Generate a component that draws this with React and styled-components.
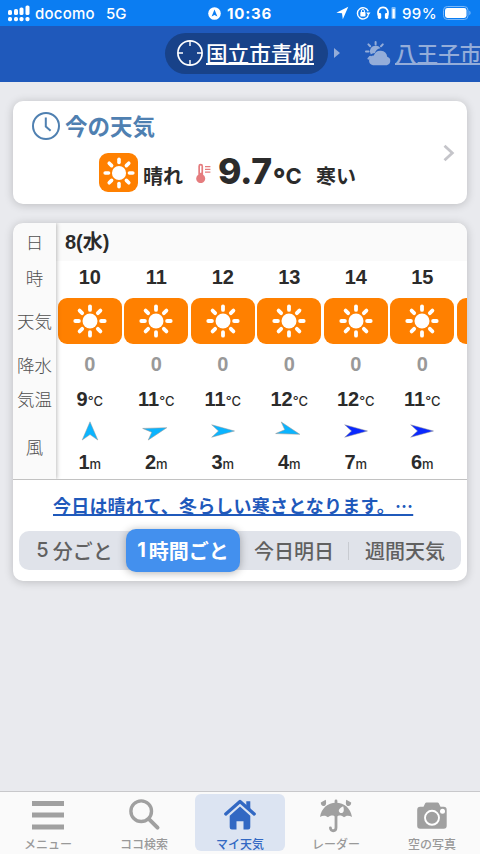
import React from 'react';
import styled, { createGlobalStyle } from 'styled-components';

const hours = [
  { hour: 10, rain: 0, temp: 9, wind: 1, angle: 0, color: '#0ab4ff' },
  { hour: 11, rain: 0, temp: 11, wind: 2, angle: 69, color: '#0ab4ff' },
  { hour: 12, rain: 0, temp: 11, wind: 3, angle: 90, color: '#0ab4ff' },
  { hour: 13, rain: 0, temp: 12, wind: 4, angle: 111, color: '#0ab4ff' },
  { hour: 14, rain: 0, temp: 12, wind: 7, angle: 90, color: '#0a28ff' },
  { hour: 15, rain: 0, temp: 11, wind: 6, angle: 90, color: '#0a28ff' },
];

const rays = [0, 45, 90, 135, 180, 225, 270, 315];

const Sun = ({ size }) => (
  <svg width={size} height={size} viewBox="0 0 34 34">
    <circle cx="17" cy="17" r="7.5" fill="#fff" />
    {rays.map((angle) => (
      <path
        key={angle}
        d="M17 2.300v3.600"
        stroke="#fff"
        strokeWidth="3.800"
        strokeLinecap="round"
        transform={`rotate(${angle} 17 17)`}
      />
    ))}
  </svg>
);

const SignalIcon = () => (
  <svg width="22" height="17" viewBox="0 0 22 17" fill="#fff">
    <rect x="0" y="5" width="4" height="5" rx="1.6" />
    <rect x="6" y="4" width="4" height="6" rx="1.6" />
    <rect x="11.5" y="2.5" width="4" height="7.5" rx="1.6" />
    <rect x="17.5" y="0.5" width="4" height="9.5" rx="1.6" />
    <rect x="0" y="12" width="4" height="4.2" rx="1.6" />
    <rect x="6" y="12" width="4" height="4.2" rx="1.6" />
    <rect x="11.5" y="12" width="4" height="4.2" rx="1.6" />
    <rect x="17.5" y="12" width="4" height="4.2" rx="1.6" />
  </svg>
);

const LocationBadge = () => (
  <svg width="13" height="13" viewBox="0 0 13 13">
    <circle cx="6.5" cy="6.5" r="6.3" fill="#fff" />
    <path d="M6.5 2.6l2.9 7-2.9-1.7-2.9 1.7z" fill="#0b7df2" />
  </svg>
);

const StatusIcons = () => (
  <svg width="61" height="16" viewBox="0 0 61 16" fill="none">
    <path d="M.3 7.8L12.3 1.800 6.8 14.200 6 8.200z" fill="#fff" />
    <path d="M32.2 6.2a5.6 5.6 0 1 0 .1 4" stroke="#fff" strokeWidth="1.400" />
    <path d="M30.2 7.6h4.3l-2.1 2.8z" fill="#fff" />
    <rect x="24.3" y="7" width="5.2" height="4.5" rx=".8" fill="#fff" />
    <path d="M25.4 7.5V6a1.5 1.5 0 0 1 3 0v1.500" stroke="#fff" />
    <path
      d="M43 11.500C40.500 7 43 2.300 47 2.300s6.500 4.700 4 9.200"
      stroke="#fff"
      strokeWidth="1.700"
    />
    <rect x="41.800" y="8" width="3.400" height="5.900" rx="1.400" fill="#fff" />
    <rect x="48.900" y="8" width="3.400" height="5.900" rx="1.400" fill="#fff" />
    <rect x="55.500" y="2" width="4.200" height="12" rx="1" fill="#84bffb" />
    <rect x="56.600" y="4" width="2.100" height="9" fill="#fff" />
  </svg>
);

const BatteryIcon = () => (
  <svg width="28" height="14" viewBox="0 0 28 14" fill="none">
    <rect x=".5" y=".5" width="24.5" height="13" rx="3.8" stroke="#79b8fa" />
    <rect x="2" y="2" width="21.5" height="10" rx="2.4" fill="#fff" />
    <path d="M26.3 4.8c1.7.6 1.7 3.8 0 4.4z" fill="#79b8fa" />
  </svg>
);

const TargetIcon = () => (
  <svg width="26" height="26" viewBox="0 0 26 26" fill="none" stroke="#fff">
    <circle cx="13" cy="13" r="12.1" strokeWidth="1.7" />
    <path d="M13 1v5M13 20v5M1 13h5M20 13h5" strokeWidth="1.4" />
  </svg>
);

const CloudSunIcon = () => (
  <svg width="27" height="25" viewBox="0 0 27 25" fill="#94add9">
    <path
      d="M1 10.500h2.600M3.400 3.400l1.800 1.800M10.600 1v2.600M17.800 3.400L16 5.200M3.400 17.600l1.800-1.800"
      stroke="#94add9"
      strokeWidth="2"
      strokeLinecap="round"
    />
    <path d="M5.800 13.500a5.400 5.400 0 0 1 9.600-6.200c-2.700.5-4.700 2.200-5.500 4.700-1.700.1-3 .7-4.100 1.500z" />
    <path d="M8 24.200a4.900 4.900 0 0 1 .8-9.700 6.900 6.900 0 0 1 13.400 1.200 4.400 4.400 0 0 1-.4 8.500z" />
  </svg>
);

const ClockIcon = () => (
  <svg width="30" height="30" viewBox="0 0 30 30" fill="none" stroke="#4f80b1">
    <circle cx="15" cy="15" r="13" strokeWidth="2" />
    <path d="M14.8 6.5v9l4.8 4.2" strokeWidth="2" />
  </svg>
);

const ThermoIcon = () => (
  <svg width="15" height="20" viewBox="0 0 15 20" fill="none">
    <path
      d="M2.300 3.200a2.400 2.400 0 0 1 4.800 0v8.600a4.500 4.500 0 1 1-4.800 0z"
      fill="#e57c7e"
    />
    <path d="M4.700 3.200v6" stroke="#fff" strokeWidth="1.400" strokeLinecap="round" />
    <path d="M9 3.600h5.400M9 6.400h5.400M9 9.100h5.400" stroke="#e57c7e" strokeWidth="1.200" />
  </svg>
);

// the arrow is flattened a little after it is turned
const WindArrow = ({ angle, color }) => (
  <svg width="28" height="26" viewBox="-14 -13 28 26">
    <path
      d="M0 -10.200L6.900 10 0 4 -6.900 10z"
      fill={color}
      stroke="#999"
      strokeWidth=".5"
      transform={`scale(1.130 .9) rotate(${angle})`}
    />
  </svg>
);

const MenuIcon = () => (
  <svg width="36" height="36" viewBox="0 0 36 36" fill="#a0a0a0">
    <path d="M2 4h32v5H2zM2 15.500h32v5H2zM2 27.500h32v5H2z" />
  </svg>
);

const SearchIcon = () => (
  <svg width="36" height="36" viewBox="0 0 36 36" fill="none" stroke="#a0a0a0">
    <circle cx="15.200" cy="14.200" r="10.300" strokeWidth="3.400" />
    <path d="M23.200 22.300l8.300 8.300" strokeWidth="4" strokeLinecap="round" />
  </svg>
);

const HomeIcon = () => (
  <svg width="36" height="36" viewBox="0 0 36 36" fill="#3268c3">
    <path d="M18 9.600l10.300 9.200v11.500a2.200 2.200 0 0 1-2.200 2.200h-4.600V24.300h-7v8.200H9.900a2.200 2.200 0 0 1-2.200-2.200V18.800z" />
    <path
      d="M3.800 17L18 4.400 32.200 17"
      fill="none"
      stroke="#dce4f2"
      strokeWidth="6.200"
    />
    <path
      d="M3.800 17L18 4.400 32.200 17"
      fill="none"
      stroke="#3268c3"
      strokeWidth="3.300"
      strokeLinecap="round"
      strokeLinejoin="round"
    />
    <path d="M24.300 4.200h4v9l-4-3.500z" />
  </svg>
);

const UmbrellaIcon = () => (
  <svg width="36" height="36" viewBox="0 0 36 36" fill="#a0a0a0">
    <path d="M2 20C3.500 11.300 9.500 5.800 18 5.800s14.500 5.500 16 14.200c-3-2-6-1.600-8 .3-2.300-2.300-5.500-2.600-8-.3-2.500-2.300-5.700-2-8 .3-2-1.900-5-2.300-8-.3z" />
    <path
      d="M18 4V30.500c0 4.300-5.600 4.300-5.600.3"
      fill="none"
      stroke="#a0a0a0"
      strokeWidth="2.800"
      strokeLinecap="round"
    />
    <path d="M2.800 5.500l4.900-2.800c1 3.500.3 6.300-2.100 6.300-1.800 0-2.800-1.400-2.800-3.500zM33.200 5.500l-4.900-2.800c-1 3.500-.3 6.300 2.100 6.300 1.800 0 2.800-1.400 2.800-3.500z" />
    <path
      d="M25.200 9.200c-3.900 2-4.900 3.800-4.100 5.600.8 1.700 3.600 1.600 4.300 0 .6-1.300.5-3-.2-5.600z"
      fill="#fafafa"
    />
  </svg>
);

const CameraIcon = () => (
  <svg width="36" height="36" viewBox="0 0 36 36">
    <path
      d="M6.200 9.800H9.500l1.700-3.600c.3-.6.7-.8 1.300-.8h11c.6 0 1 .2 1.300.8l1.700 3.600h3.200a3 3 0 0 1 3 3V28.800a3 3 0 0 1-3 3H6.200a3 3 0 0 1-3-3V12.800a3 3 0 0 1 3-3z"
      fill="#a0a0a0"
    />
    <circle cx="18" cy="20.800" r="7" fill="none" stroke="#fff" strokeWidth="1.900" />
    <circle cx="28.500" cy="14.300" r="2.500" fill="#fff" />
  </svg>
);

const tabs = [
  { label: 'メニュー', Icon: MenuIcon },
  { label: 'ココ検索', Icon: SearchIcon },
  { label: 'マイ天気', Icon: HomeIcon, active: true },
  { label: 'レーダー', Icon: UmbrellaIcon },
  { label: '空の写真', Icon: CameraIcon },
];

const App = () => {
  return (
    <>
      <GlobalStyle />
      <StyledScreen>
        <StyledStatus>
          <StyledStatusLeft>
            <SignalIcon />
            <StyledCarrier>docomo</StyledCarrier>
            <span>5G</span>
          </StyledStatusLeft>
          <StyledStatusTime>
            <LocationBadge />
            10:36
          </StyledStatusTime>
          <StyledStatusRight>
            <StatusIcons />
            <StyledPercent>99%</StyledPercent>
            <BatteryIcon />
          </StyledStatusRight>
        </StyledStatus>

        <StyledHeader>
          <StyledPlace>
            <TargetIcon />
            <StyledPlaceName>国立市青柳</StyledPlaceName>
          </StyledPlace>
          <StyledCaret />
          <StyledNextPlace>
            <CloudSunIcon />
            <StyledPlaceName $faded>八王子市</StyledPlaceName>
          </StyledNextPlace>
        </StyledHeader>

        <StyledMain>
          <StyledNow>
            <StyledNowTitle>
              <ClockIcon />
              <StyledH2>今の天気</StyledH2>
            </StyledNowTitle>
            <StyledNowRow>
              <StyledNowTile>
                <Sun size={32} />
              </StyledNowTile>
              <StyledNowText>晴れ</StyledNowText>
              <ThermoIcon />
              <StyledTemp>
                9.7<StyledDegree>°</StyledDegree>
                <StyledCelsius>C</StyledCelsius>
              </StyledTemp>
              <StyledNowText>寒い</StyledNowText>
            </StyledNowRow>
            <StyledChevron viewBox="0 0 12 18">
              <path d="M1.500 1.800L9.300 9 1.500 16.200" />
            </StyledChevron>
          </StyledNow>

          <StyledForecast>
            <StyledTable>
              <StyledLabels>
                <StyledLabel $height={38}>日</StyledLabel>
                <StyledLabel $height={34}>時</StyledLabel>
                <StyledLabel $height={52}>天気</StyledLabel>
                <StyledLabel $height={37}>降水</StyledLabel>
                <StyledLabel $height={31}>気温</StyledLabel>
                <StyledLabel $height={64}>風</StyledLabel>
              </StyledLabels>
              <StyledHours>
                <StyledDate>8(水)</StyledDate>
                <StyledColumns>
                  {hours.map((item) => (
                    <StyledColumn key={item.hour}>
                      <StyledCell $height={33}>{item.hour}</StyledCell>
                      <StyledTile>
                        <Sun size={34} />
                      </StyledTile>
                      <StyledCell $height={41} $muted>
                        {item.rain}
                      </StyledCell>
                      <StyledCell $height={28}>
                        {item.temp}
                        <StyledUnit>°C</StyledUnit>
                      </StyledCell>
                      <StyledWind>
                        <WindArrow angle={item.angle} color={item.color} />
                      </StyledWind>
                      <StyledCell $height={27}>
                        {item.wind}
                        <StyledUnit>m</StyledUnit>
                      </StyledCell>
                    </StyledColumn>
                  ))}
                  {/* next hour, only its edge is on screen */}
                  <StyledColumn>
                    <StyledCell $height={33} />
                    <StyledTile />
                  </StyledColumn>
                </StyledColumns>
              </StyledHours>
            </StyledTable>
            <StyledComment>今日は晴れて、冬らしい寒さとなります。…</StyledComment>
            <StyledSegments>
              <StyledSegment $width={107} $shift={4}>
                <StyledDigit>5</StyledDigit>分ごと
              </StyledSegment>
              <StyledSegment $width={114} $active>
                <StyledDigit $bold>1</StyledDigit>時間ごと
              </StyledSegment>
              <StyledSegment $width={108}>今日明日</StyledSegment>
              <StyledDivider />
              <StyledSegment $width={112}>週間天気</StyledSegment>
            </StyledSegments>
          </StyledForecast>
        </StyledMain>

        <StyledTabBar>
          {tabs.map(({ label, Icon, active }) => (
            <StyledTab key={label} $active={active}>
              <Icon />
              <StyledTabLabel>{label}</StyledTabLabel>
            </StyledTab>
          ))}
        </StyledTabBar>
      </StyledScreen>
    </>
  );
};

const GlobalStyle = createGlobalStyle`
  * {
    box-sizing: border-box;
  }
  body {
    margin: 0;
    font-family: 'Liberation Sans', 'Noto Sans CJK JP', sans-serif;
    color: #2b2b2b;
  }
  svg {
    display: block;
    flex-shrink: 0;
  }
`;

const StyledScreen = styled.div`
  width: 480px;
  height: 854px;
  display: flex;
  flex-direction: column;
  overflow: hidden;
  background-color: #e9eaee;
`;

const StyledStatus = styled.div`
  height: 26px;
  flex-shrink: 0;
  display: grid;
  grid-template-columns: 200px 80px 200px;
  align-items: center;
  background-color: #0b7df2;
  color: #fff;
  font-family: Inter, sans-serif;
  font-size: 15px;
  font-weight: 500;
`;

const StyledStatusLeft = styled.div`
  display: flex;
  align-items: center;
  padding-left: 8px;
`;

const StyledCarrier = styled.span`
  margin: 0 11px 0 5px;
  letter-spacing: 0.25px;
`;

const StyledStatusTime = styled.div`
  display: flex;
  align-items: center;
  gap: 6px;
  padding-left: 8px;
  font-weight: 700;
  letter-spacing: 0.8px;
  white-space: nowrap;
`;

const StyledStatusRight = styled.div`
  display: flex;
  align-items: center;
  justify-content: flex-end;
  padding-right: 9px;
`;

const StyledPercent = styled.span`
  margin: 0 6px 0 5px;
  letter-spacing: 0.4px;
`;

const StyledHeader = styled.header`
  height: 56px;
  flex-shrink: 0;
  display: flex;
  align-items: center;
  padding: 0 0 2px 165px;
  background-color: #1f59bb;
  overflow: hidden;
`;

const StyledPlace = styled.div`
  width: 163px;
  height: 41px;
  flex-shrink: 0;
  display: flex;
  align-items: center;
  gap: 3px;
  padding-left: 12px;
  border-radius: 21px;
  background-color: #184289;
`;

const StyledPlaceName = styled.span`
  font-family: 'Noto Sans CJK JP', sans-serif;
  font-size: 21.6px;
  font-weight: 500;
  line-height: 30px;
  white-space: nowrap;
  color: ${({ $faded }) => ($faded ? '#94add9' : '#fff')};
  text-decoration: underline;
  text-decoration-thickness: 1.5px;
  text-underline-offset: 1px;
  text-decoration-skip-ink: none;
`;

const StyledCaret = styled.div`
  margin: 0 25px 0 6px;
  border-left: 6px solid #94add9;
  border-top: 5px solid transparent;
  border-bottom: 5px solid transparent;
`;

const StyledNextPlace = styled.div`
  display: flex;
  align-items: center;
  gap: 3px;
`;

const StyledMain = styled.main`
  flex: 1;
  display: flex;
  flex-direction: column;
  gap: 19px;
  padding: 19px 13px 0;
`;

const StyledCard = styled.section`
  border-radius: 10px;
  background-color: #fff;
  box-shadow: 0 1px 10px rgba(0, 0, 0, 0.2);
`;

const StyledNow = styled(StyledCard)`
  height: 103px;
  display: grid;
  grid-template-columns: 1fr 24px;
  grid-template-rows: 51px 52px;
`;

const StyledNowTitle = styled.div`
  display: flex;
  align-items: center;
  gap: 4px;
  padding-left: 18px;
  padding-bottom: 1px;
`;

const StyledH2 = styled.h2`
  margin: 0;
  padding-bottom: 3px;
  font-family: 'Noto Sans CJK JP', sans-serif;
  font-size: 22.5px;
  font-weight: 700;
  line-height: 30px;
  color: #4f80b1;
`;

const StyledNowRow = styled.div`
  grid-row: 2;
  display: flex;
  align-items: center;
  padding: 0 0 11px 86px;
`;

const StyledNowTile = styled.div`
  width: 39px;
  height: 39px;
  margin-right: 5px;
  display: flex;
  align-items: center;
  justify-content: center;
  border-radius: 9px;
  background-color: #ff8000;
`;

const StyledNowText = styled.span`
  font-family: 'Noto Sans CJK JP', sans-serif;
  font-size: 20px;
  font-weight: 700;
  line-height: 28px;
  margin: 6px 13px 0 0;
`;

const StyledTemp = styled.span`
  width: 91px;
  margin-left: 7px;
  margin-right: 7px;
  margin-top: 2px;
  font-family: Inter, sans-serif;
  font-size: 35.5px;
  font-weight: 800;
  line-height: 40px;
  letter-spacing: -0.3px;
  white-space: nowrap;
`;

const StyledDegree = styled.span`
  display: inline-block;
  margin-left: 1px;
  font-size: 28px;
  line-height: 20px;
  transform: translateY(5px);
`;

const StyledCelsius = styled.span`
  font-size: 22px;
  font-weight: 700;
`;

const StyledChevron = styled.svg`
  grid-column: 2;
  grid-row: 1 / 3;
  align-self: center;
  width: 12px;
  height: 18px;
  fill: none;
  stroke: #c5c5ca;
  stroke-width: 2.8;
`;

const StyledForecast = styled(StyledCard)`
  height: 358px;
  overflow: hidden;
`;

const StyledTable = styled.div`
  height: 257px;
  display: flex;
  border-bottom: 1px solid #c2c2c2;
  overflow: hidden;
`;

const StyledLabels = styled.div`
  width: 43px;
  flex-shrink: 0;
  z-index: 1;
  background-color: #fafafa;
  box-shadow: 1px 0 4px rgba(0, 0, 0, 0.25);
`;

const StyledLabel = styled.div`
  height: ${({ $height }) => $height}px;
  display: flex;
  align-items: center;
  justify-content: center;
  padding-bottom: 2px;
  font-family: 'Noto Sans CJK JP', sans-serif;
  font-size: 17.5px;
  font-weight: 300;
  color: #505050;
`;

const StyledHours = styled.div`
  flex: 1;
  min-width: 0;
  overflow: hidden;
`;

const StyledDate = styled.div`
  height: 38px;
  padding-left: 9px;
  background-color: #fafafa;
  font-size: 20px;
  font-weight: 700;
  line-height: 38px;
`;

const StyledColumns = styled.div`
  display: flex;
  padding-left: 0.5px;
`;

const StyledColumn = styled.div`
  width: 66.5px;
  flex-shrink: 0;
  display: flex;
  flex-direction: column;
  align-items: center;
`;

const StyledCell = styled.div`
  height: ${({ $height }) => $height}px;
  line-height: ${({ $height }) => $height}px;
  font-size: 20px;
  font-weight: 700;
  white-space: nowrap;
  color: ${({ $muted }) => ($muted ? '#999' : '#2b2b2b')};
`;

const StyledTile = styled.div`
  width: 64px;
  height: 46px;
  margin-top: 4px;
  display: flex;
  align-items: center;
  justify-content: center;
  border-radius: 9px;
  background-color: #ff8000;
`;

const StyledUnit = styled.span`
  font-family: Inter, sans-serif;
  font-size: 13px;
  font-weight: 500;
`;

const StyledWind = styled.div`
  height: 36px;
  display: flex;
  align-items: center;
`;

const StyledComment = styled.div`
  height: 51px;
  padding-left: 40px;
  font-family: 'Noto Sans CJK JP', sans-serif;
  font-size: 18px;
  font-weight: 700;
  line-height: 51px;
  letter-spacing: 0.2px;
  white-space: nowrap;
  color: #1f59bb;
  text-decoration: underline;
  text-decoration-thickness: 1.5px;
  text-underline-offset: 1px;
`;

const StyledSegments = styled.div`
  height: 39px;
  margin: 0 6px;
  display: flex;
  align-items: center;
  border-radius: 10px;
  background-color: #e0e3ea;
`;

const StyledSegment = styled.div`
  width: ${({ $width }) => $width}px;
  height: 43px;
  flex-shrink: 0;
  display: flex;
  align-items: center;
  justify-content: center;
  padding-left: ${({ $shift }) => $shift || 0}px;
  padding-bottom: 1px;
  border-radius: 10px;
  font-family: 'Noto Sans CJK JP', sans-serif;
  font-size: 20px;
  font-weight: ${({ $active }) => ($active ? 700 : 500)};
  white-space: nowrap;
  color: ${({ $active }) => ($active ? '#fff' : '#606060')};
  background-color: ${({ $active }) => ($active ? '#4390ee' : 'transparent')};
  box-shadow: ${({ $active }) =>
    $active ? '0 1px 8px rgba(0, 0, 0, 0.3)' : 'none'};
`;

const StyledDigit = styled.span`
  margin-right: ${({ $bold }) => ($bold ? 3 : 4)}px;
  font-family: Inter, sans-serif;
`;

const StyledDivider = styled.div`
  width: 1px;
  height: 18px;
  background-color: #c8cbd1;
`;

const StyledTabBar = styled.nav`
  height: 63px;
  flex-shrink: 0;
  display: grid;
  grid-template-columns: repeat(5, 90px);
  justify-content: space-between;
  padding: 2px 3px;
  border-top: 1px solid #c8c8cb;
  background-color: #fafafa;
`;

const StyledTab = styled.div`
  height: 57px;
  display: flex;
  flex-direction: column;
  align-items: center;
  padding-top: 3px;
  border-radius: 6px;
  color: ${({ $active }) => ($active ? '#3268c3' : '#999')};
  background-color: ${({ $active }) => ($active ? '#dce4f2' : 'transparent')};
`;

const StyledTabLabel = styled.span`
  padding-top: 1px;
  font-family: 'Noto Sans CJK JP', sans-serif;
  font-size: 12px;
  font-weight: 500;
  line-height: 20px;
`;

export default App;
